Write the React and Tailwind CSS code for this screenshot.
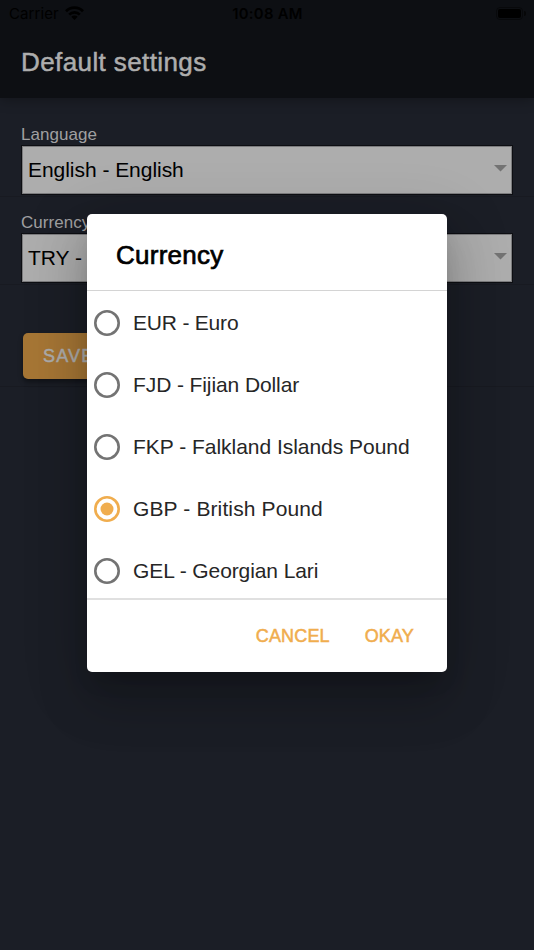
const currencies = [
  { code: "EUR", name: "Euro", tracking: "tracking-[-0.2px]" },
  { code: "FJD", name: "Fijian Dollar", tracking: "tracking-[-0.1px]" },
  { code: "FKP", name: "Falkland Islands Pound", tracking: "tracking-[-0.03px]" },
  { code: "GBP", name: "British Pound", tracking: "tracking-[0.12px]" },
  { code: "GEL", name: "Georgian Lari", tracking: "tracking-[-0.1px]" },
];

function StatusBar() {
  return (
    <div className="grid grid-cols-3 items-center h-7 pl-[9px] pr-[8px] text-black font-['Inter',sans-serif] text-[15px] leading-7">
      <div className="flex items-center gap-[6px]">
        <span className="tracking-[0.1px]">Carrier</span>
        <svg width="19" height="14" viewBox="0 0 19 14" fill="none" stroke="currentColor" strokeWidth="2.7" className="-mt-[2px]">
          <path d="M1 5.2a12 12 0 0 1 17 0" />
          <path d="M4.2 8.6a7.5 7.5 0 0 1 10.6 0" />
          <path d="M9.5 14 6.3 10.8a4.6 4.6 0 0 1 6.4 0z" fill="currentColor" stroke="none" />
        </svg>
      </div>
      <span className="text-center font-semibold text-[14.8px] tracking-[0.3px]">10:08 AM</span>
      <div className="flex items-center justify-end -mt-[2px]">
        <div className="w-[27px] h-[13px] rounded-[4px] border border-[#08090b] p-px">
          <div className="h-full rounded-[2px] bg-black" />
        </div>
        <div className="ml-px w-[2px] h-[5px] rounded-r-full bg-[#060708]" />
      </div>
    </div>
  );
}

function SelectField({ label, value }) {
  return (
    <div className="h-[88px] px-[21px]">
      <div className="h-[21px] text-[17px] leading-[21px] tracking-[0.05px] text-[#a0a0a1]">{label}</div>
      <div className="flex items-center justify-between h-[50px] pl-[6px] pr-[5px] border border-[#0d0e12] bg-[#adadad] text-[21px] tracking-[-0.04px] text-black ring-1 ring-inset ring-[#7c7c7e]">
        <span>{value}</span>
        <svg width="13" height="7" viewBox="0 0 13 7" className="mb-1">
          <path d="M0 0h13L6.5 6.5z" fill="#737373" />
        </svg>
      </div>
      <div className="-mx-[21px] h-[2px] border-b border-[#181a21]" />
    </div>
  );
}

function RadioMark({ checked }) {
  const color = checked ? "#f0ad4e" : "#737373";

  return (
    <svg width="26" height="26" viewBox="0 0 26 26" fill="none">
      <circle cx="13" cy="13" r="11.7" stroke={color} strokeWidth="2.6" />
      {checked && <circle cx="13" cy="13" r="6.5" fill={color} />}
    </svg>
  );
}

function CurrencyOption({ currency, checked }) {
  return (
    <label className="flex items-center h-[62px] pl-[7px]">
      <RadioMark checked={checked} />
      <span className={`ml-[13px] text-[21px] text-[#262626] whitespace-nowrap ${currency.tracking}`}>
        {currency.code} - {currency.name}
      </span>
    </label>
  );
}

function CurrencyDialog({ selected }) {
  return (
    <div className="absolute left-[87px] top-[214px] w-[360px] h-[458px] flex flex-col overflow-hidden rounded-[5px] bg-white shadow-[0_14px_20px_-9px_rgba(0,0,0,0.2),0_31px_50px_4px_rgba(0,0,0,0.14),0_12px_60px_10px_rgba(0,0,0,0.12)]">
      <h2 className="h-[77px] pt-[25px] pl-[29px] border-b border-[#d4d4d4] text-[26px] leading-[32px] tracking-[0.25px] text-black [-webkit-text-stroke:0.7px_black]">
        Currency
      </h2>
      <div className="h-[307px] pt-px overflow-hidden">
        {currencies.map((currency) => (
          <CurrencyOption key={currency.code} currency={currency} checked={currency.code === selected} />
        ))}
      </div>
      <div className="flex-1 flex items-start justify-end gap-[35px] pt-[24px] pr-[33px] border-t-2 border-[#e0e0e0] text-[18px] leading-6 tracking-[0.15px] text-[#f0ad4e] [-webkit-text-stroke:0.5px_#f0ad4e]">
        <button>CANCEL</button>
        <button>OKAY</button>
      </div>
    </div>
  );
}

export default function App() {
  return (
    <div className="relative w-full h-[950px] overflow-hidden bg-[#1b1e26] font-['Liberation_Sans',Arial,sans-serif]">
      <header className="h-[98px] bg-[#0d0f13] shadow-[0_2px_12px_rgba(0,0,0,0.3)]">
        <StatusBar />
        <h1 className="pt-[18px] pl-[21px] text-[26px] leading-[32px] tracking-[0.4px] text-[#adadad] [-webkit-text-stroke:0.5px_#adadad]">
          Default settings
        </h1>
      </header>

      <main>
        <div className="pt-[26px]">
          <SelectField label="Language" value="English - English" />
          <SelectField label="Currency" value="TRY -" />
        </div>
        <div className="h-[87px] pt-[33px] pl-[23px] border-b border-[#181a21]">
          <button className="h-[46px] px-5 rounded-[5px] bg-[#a67635] text-[18px] tracking-[1.2px] text-[#adadad] [-webkit-text-stroke:0.5px_#adadad] shadow-[0_3px_5px_rgba(0,0,0,0.4)]">
            SAVE
          </button>
        </div>
      </main>

      <CurrencyDialog selected="GBP" />
    </div>
  );
}
